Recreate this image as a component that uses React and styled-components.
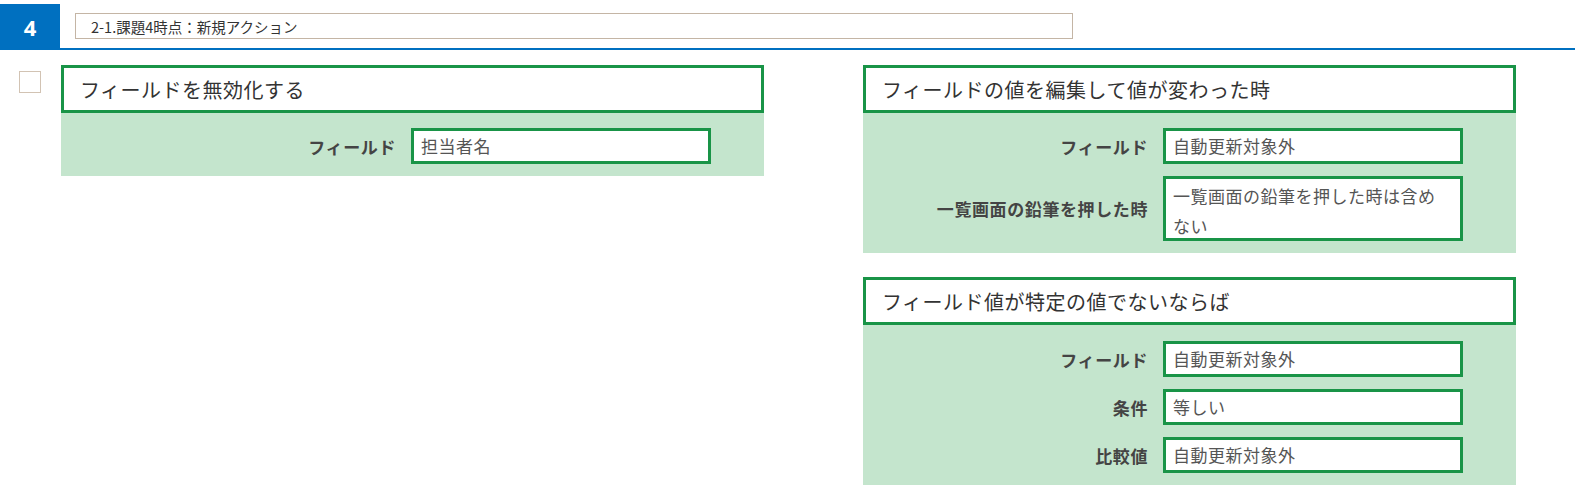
import styled, { createGlobalStyle } from 'styled-components';

const GlobalStyle = createGlobalStyle`
  body {
    margin: 0;
    background: #fff;
    font-family: 'Noto Sans CJK JP', 'Noto Sans', sans-serif;
    color: #333;
  }
`

const TopBar = styled.div`
  display: flex;
  align-items: center;
  padding-top: 4px;
  border-bottom: 2px solid #0070c0;
`

const Number = styled.div`
  width: 60px;
  height: 44px;
  background: #0070c0;
  color: #fff;
  font-family: 'Open Sans', 'Noto Sans', sans-serif;
  font-weight: bold;
  font-size: 22px;
  padding-top: 2px;
  box-sizing: border-box;
  display: flex;
  align-items: center;
  justify-content: center;
`

const TitleBox = styled.div`
  margin-left: 15px;
  width: 998px;
  height: 26px;
  box-sizing: border-box;
  border: 1px solid #c4b5a5;
  font-size: 14.5px;
  color: #333;
  padding-left: 15px;
  display: flex;
  align-items: center;
`

const Content = styled.div`
  display: flex;
  align-items: flex-start;
  padding: 15px 0 0 19px;
`

const Check = styled.div`
  width: 22px;
  height: 22px;
  box-sizing: border-box;
  border: 1px solid #d2c3b3;
  margin-top: 6px;
  margin-right: 20px;
`

const Column = styled.div`
  display: flex;
  flex-direction: column;
  gap: 24px;
  width: ${(props) => props.width}px;
  margin-right: ${(props) => props.gap || 0}px;
`

const Card = styled.div`
  display: flex;
  flex-direction: column;
`

const CardHeader = styled.div`
  height: 48px;
  box-sizing: border-box;
  border: 3px solid #199447;
  background: #fff;
  padding-left: 16px;
  display: flex;
  align-items: center;
  font-size: 20px;
  letter-spacing: 0.5px;
  color: #333;
`

const CardBody = styled.div`
  background: #c4e5cd;
  padding: ${(props) => props.top}px 53px 12px 0;
  display: flex;
  flex-direction: column;
  gap: 12px;
`

const Row = styled.div`
  display: flex;
  align-items: center;
`

const Label = styled.div`
  flex: 1;
  text-align: right;
  font-weight: bold;
  font-size: 17px;
  letter-spacing: 0.6px;
  color: #444;
  margin-right: 15px;
`

const Field = styled.div`
  width: 300px;
  height: ${(props) => (props.multi ? 65 : 36)}px;
  box-sizing: border-box;
  border: 3px solid #199447;
  background: #fff;
  padding: ${(props) => (props.multi ? '2px 14px 2px 7px' : '0 7px')};
  font-size: 17px;
  letter-spacing: 0.5px;
  line-height: 30px;
  color: #555;
`

const ActionCard = ({ title, rows, top = 15 }) => (
  <Card>
    <CardHeader>{title}</CardHeader>
    <CardBody top={top}>
      {rows.map((r) => (
        <Row key={r.label}>
          <Label>{r.label}</Label>
          <Field multi={r.multi}>{r.value}</Field>
        </Row>
      ))}
    </CardBody>
  </Card>
)

const App = () => {
  return (
    <>
      <GlobalStyle />
      <TopBar>
        <Number>4</Number>
        <TitleBox>2-1.課題4時点：新規アクション</TitleBox>
      </TopBar>
      <Content>
        <Check />
        <Column width={703} gap={99}>
          <ActionCard
            title="フィールドを無効化する"
            rows={[{ label: 'フィールド', value: '担当者名' }]}
          />
        </Column>
        <Column width={653}>
          <ActionCard
            title="フィールドの値を編集して値が変わった時"
            rows={[
              { label: 'フィールド', value: '自動更新対象外' },
              { label: '一覧画面の鉛筆を押した時', value: '一覧画面の鉛筆を押した時は含めない', multi: true },
            ]}
          />
          <ActionCard
            title="フィールド値が特定の値でないならば"
            top={16}
            rows={[
              { label: 'フィールド', value: '自動更新対象外' },
              { label: '条件', value: '等しい' },
              { label: '比較値', value: '自動更新対象外' },
            ]}
          />
        </Column>
      </Content>
    </>
  )
}

export default App
